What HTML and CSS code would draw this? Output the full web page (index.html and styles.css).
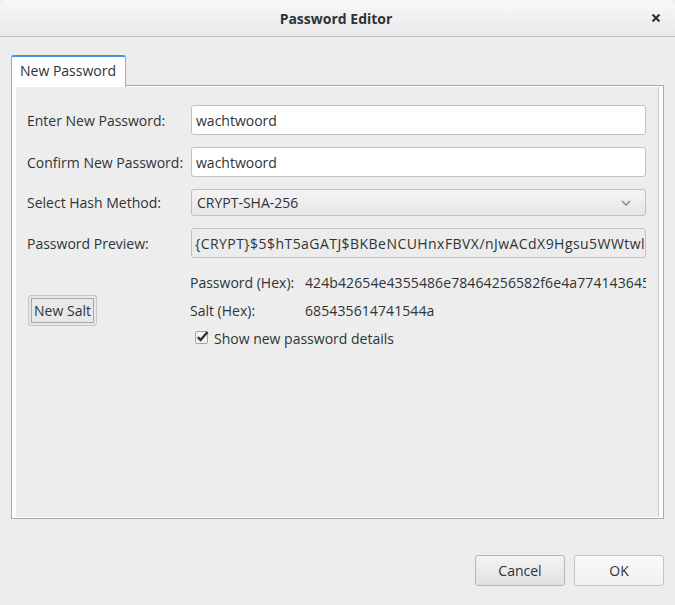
FILE: index.html
```html
<!DOCTYPE html>
<html>
<head>
<meta charset="utf-8">
<title>Password Editor</title>
<link rel="stylesheet" href="styles.css">
</head>
<body>
<div class="window">
  <header class="titlebar">
    <span class="title">Password Editor</span>
    <span class="close">
      <svg width="10" height="10" viewBox="0 0 10 10"><path d="M1.5 1.5 L8.5 8.5 M8.5 1.5 L1.5 8.5" stroke="#2e3436" stroke-width="2.2" stroke-linecap="butt"/></svg>
    </span>
  </header>
  <main class="content">
    <div class="tabs"><div class="tab">New Password</div></div>
    <section class="panel">
      <div class="page">
        <div class="form">
          <label class="label">Enter New Password:</label>
          <div class="field">wachtwoord</div>
          <label class="label">Confirm New Password:</label>
          <div class="field">wachtwoord</div>
          <label class="label">Select Hash Method:</label>
          <div class="combo"><span>CRYPT-SHA-256</span>
            <svg class="chev" width="10" height="6" viewBox="0 0 10 6"><path d="M1 1 L5 5 L9 1" fill="none" stroke="#8a8f91" stroke-width="1.6"/></svg>
          </div>
          <label class="label">Password Preview:</label>
          <div class="field readonly">{CRYPT}$5$hT5aGATJ$BKBeNCUHnxFBVX/nJwACdX9Hgsu5WWtwlR3cQ1lMpkB9</div>
        </div>
        <div class="details">
          <div class="salt-col"><button class="salt-btn">New Salt</button></div>
          <div class="hex">
            <span class="hlabel">Password (Hex):</span>
            <span class="hvalue">424b42654e4355486e78464256582f6e4a7741436458394867737535575774776c52336351</span>
            <span class="hlabel">Salt (Hex):</span>
            <span class="hvalue">685435614741544a</span>
            <div class="check">
              <span class="box"><svg width="17" height="15" viewBox="0 0 17 15"><rect x="0.5" y="2.5" width="12" height="12" rx="1.5" fill="#f2f2f2" stroke="#a3a3a3"/><path d="M2.8 8.2 L5.6 11 L12.5 3" fill="none" stroke="#2e3436" stroke-width="2.4"/></svg></span>
              <span>Show new password details</span>
            </div>
          </div>
        </div>
      </div>
    </section>
  </main>
  <footer class="actions">
    <button class="btn cancel">Cancel</button>
    <button class="btn ok">OK</button>
  </footer>
</div>
</body>
</html>
```

FILE: styles.css
```css
html, body {
  margin: 0;
  padding: 0;
  background: #ededed;
}
body {
  font-family: "Open Sans", "Noto Sans", sans-serif;
  font-size: 14px;
  color: #2e3436;
}
.window {
  width: 675px;
  height: 605px;
  display: flex;
  flex-direction: column;
  background: #ededed;
}
.titlebar {
  height: 36px;
  border-bottom: 1px solid #bdbdbd;
  background: linear-gradient(#f8f8f8, #e9e9e9);
  border-radius: 6px 6px 0 0;
  display: flex;
  align-items: center;
  justify-content: center;
  position: relative;
  flex: none;
}
.title {
  font-weight: bold;
  font-size: 14px;
  color: #2e3436;
  margin-left: -3px;
}
.close {
  position: absolute;
  right: 14px;
  top: 13px;
  display: flex;
}
.content {
  padding: 18px 11px 0 11px;
  flex: none;
}
.tabs {
  display: flex;
  height: 31px;
  position: relative;
  z-index: 1;
}
.tab {
  border: 1px solid #a9a9a9;
  border-top: 2px solid #4a90d9;
  border-bottom: none;
  border-radius: 3px 3px 0 0;
  background: #fff;
  padding-left: 8px;
  box-sizing: border-box;
  width: 115px;
  height: 32px;
  line-height: 28px;
}
.panel {
  height: 434px;
  border: 1px solid #a9a9a9;
  background: #fff;
  padding: 1px 4px 1px 4px;
  box-sizing: border-box;
  margin-top: -1px;
  display: flex;
}
.page {
  flex: 1;
  background: #ededed;
  border-right: 1px solid #c9c9c9;
  padding: 18px 12px 0 11px;
}
.form {
  display: grid;
  grid-template-columns: 164px 1fr;
  grid-template-rows: 30px 30px 27px 30px;
  row-gap: 12px;
  align-items: center;
}
.label {
  white-space: nowrap;
}
.field {
  height: 100%;
  box-sizing: border-box;
  border: 1px solid #c2c2c2;
  border-radius: 3px;
  background: #fff;
  padding: 0 4px;
  display: flex;
  align-items: center;
  overflow: hidden;
  white-space: nowrap;
}
.field.readonly {
  background: #ececec;
  padding: 0 3px;
  letter-spacing: 0.45px;
}
.combo {
  height: 100%;
  box-sizing: border-box;
  border: 1px solid #c0c0c0;
  border-radius: 3px;
  background: linear-gradient(#f4f4f4, #e6e6e6);
  padding: 0 14px 0 5px;
  display: flex;
  align-items: center;
  justify-content: space-between;
}
.details {
  display: flex;
  margin-top: 10px;
}
.salt-col {
  width: 163px;
  display: flex;
  align-items: center;
}
.salt-btn {
  margin-left: 1px;
  font: inherit;
  color: #2e3436;
  height: 31px;
  width: 69px;
  padding: 0;
  border: 1px solid #c6c6c6;
  border-radius: 3px;
  background: #e8e8e8;
  box-shadow: inset 0 0 0 2px #e8e8e8, inset 0 0 0 3px #a9a9a9;
}
.hex {
  flex: 1;
  display: grid;
  grid-template-columns: 115px 1fr;
  grid-auto-rows: 28px;
  align-items: center;
  overflow: hidden;
}
.hlabel, .hvalue {
  white-space: nowrap;
  overflow: hidden;
}
.hvalue {
  letter-spacing: 0.1px;
}
.check {
  grid-column: 1 / span 2;
  display: flex;
  align-items: center;
  padding-left: 5px;
  gap: 2px;
}
.box {
  display: flex;
  margin-top: -3px;
}
.actions {
  display: flex;
  justify-content: flex-end;
  gap: 9px;
  padding: 36px 11px 0 0;
}
.btn {
  font: inherit;
  color: #2e3436;
  width: 90px;
  height: 31px;
  border: 1px solid #b6b6b6;
  border-radius: 3px;
  padding: 0;
}
.cancel {
  background: linear-gradient(#f4f4f4, #e1e1e1);
}
.ok {
  background: linear-gradient(#fafafa, #f0f0f0);
  border-color: #c4c4c4;
}
```
